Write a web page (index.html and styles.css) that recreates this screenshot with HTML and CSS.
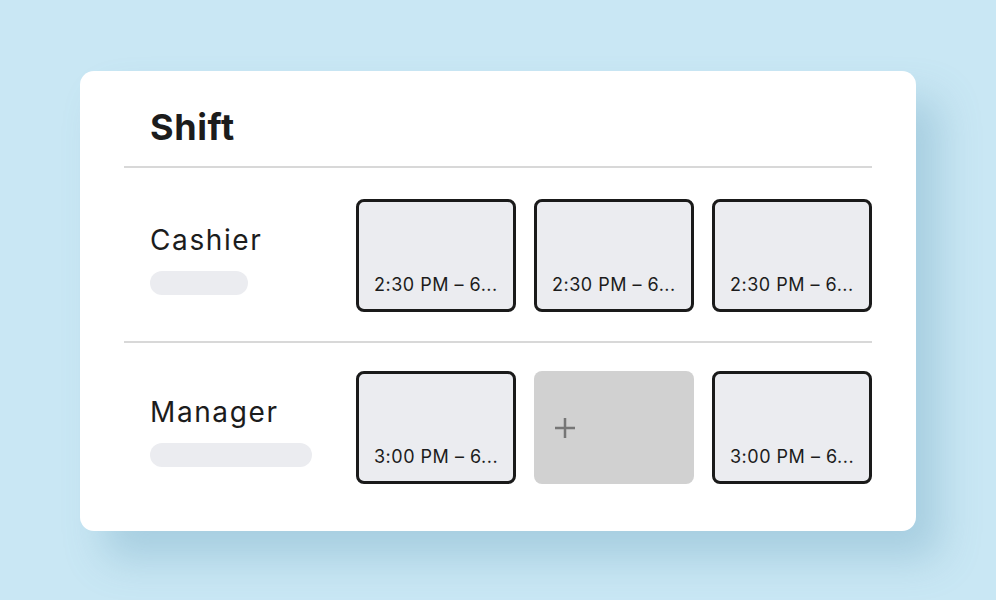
FILE: index.html
```html
<!DOCTYPE html>
<html>
<head>
<meta charset="utf-8">
<link rel="stylesheet" href="styles.css">
</head>
<body>
<div class="card">
  <div class="header"><h1 class="title">Shift</h1></div>
  <div class="row">
    <div class="label">
      <div class="name">Cashier</div>
      <div class="pill pill-short"></div>
    </div>
    <div class="tiles">
      <div class="tile"><span class="time">2:30 PM – 6...</span></div>
      <div class="tile"><span class="time">2:30 PM – 6...</span></div>
      <div class="tile"><span class="time">2:30 PM – 6...</span></div>
    </div>
  </div>
  <div class="row">
    <div class="label">
      <div class="name">Manager</div>
      <div class="pill pill-long"></div>
    </div>
    <div class="tiles">
      <div class="tile"><span class="time">3:00 PM – 6...</span></div>
      <div class="tile tile-add">
        <svg class="plus" width="22" height="22" viewBox="0 0 22 22"><path d="M11 1v20M1 11h20" stroke="#767676" stroke-width="2.5"/></svg>
      </div>
      <div class="tile"><span class="time">3:00 PM – 6...</span></div>
    </div>
  </div>
</div>
</body>
</html>
```
FILE: styles.css
```css
html, body {
  margin: 0;
  padding: 0;
}
body {
  background: #c9e7f4;
  width: 996px;
  height: 600px;
  overflow: hidden;
  font-family: Inter, "Noto Sans", sans-serif;
  color: #1c1c1c;
}
.card {
  margin: 71px 0 0 80px;
  width: 836px;
  height: 460px;
  box-sizing: border-box;
  background: #fff;
  border-radius: 14px;
  padding: 0 44px;
  box-shadow: 24px 28px 40px rgba(90, 150, 180, 0.3);
}
.header {
  height: 97px;
  box-sizing: border-box;
  padding: 36px 0 0 26px;
  border-bottom: 2px solid #d8d8d8;
}
.title {
  margin: 0;
  font-size: 36px;
  font-weight: 700;
  line-height: 40px;
  letter-spacing: 0.6px;
}
.row {
  display: flex;
  padding: 31px 0 29px 26px;
}
.row + .row {
  border-top: 2px solid #d8d8d8;
  padding-top: 28px;
}
.label {
  width: 206px;
  padding-top: 25px;
}
.name {
  font-size: 28px;
  line-height: 32px;
  font-weight: 400;
  letter-spacing: 1.6px;
}
.pill {
  margin-top: 15px;
  height: 24px;
  border-radius: 12px;
  background: #ebecf0;
}
.pill-short { width: 98px; }
.pill-long { width: 162px; }
.tiles {
  display: flex;
  gap: 18px;
}
.tile {
  width: 160px;
  height: 113px;
  box-sizing: border-box;
  border: 3px solid #1a1a1a;
  border-radius: 8px;
  background: #ebecf0;
  display: flex;
  align-items: flex-end;
  padding: 0 0 13px 15px;
}
.time {
  font-size: 18px;
  line-height: 22px;
  white-space: nowrap;
  letter-spacing: 0.5px;
}
.tile-add {
  border: none;
  background: #d1d1d1;
  align-items: center;
  padding: 0 0 0 20px;
}
.plus {
  display: block;
  margin-top: 0;
}
```
